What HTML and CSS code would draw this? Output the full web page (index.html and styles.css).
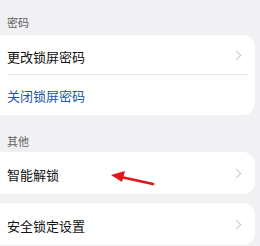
FILE: index.html
```html
<!DOCTYPE html>
<html lang="zh-CN">
<head>
<meta charset="UTF-8">
<meta name="viewport" content="width=device-width, initial-scale=1.0">
<title>锁屏与密码</title>
<link rel="stylesheet" href="styles.css">
</head>
<body>
    <div class="group-title first">密码</div>
    <div class="card">
        <div class="row divider">
            <span>更改锁屏密码</span>
            <span class="chevron"></span>
        </div>
        <div class="row flat link">
            <span>关闭锁屏密码</span>
        </div>
    </div>

    <div class="group-title">其他</div>
    <div class="card">
        <div class="row tall">
            <span>智能解锁</span>
            <span class="chevron"></span>
        </div>
    </div>
    <div class="card gap">
        <div class="row tall">
            <span>安全锁定设置</span>
            <span class="chevron"></span>
        </div>
    </div>

    <!-- seta vermelha apontando para "智能解锁" -->
    <svg class="pointer" width="50" height="16" viewBox="0 0 50 16">
        <line x1="42" y1="12" x2="10" y2="5" stroke="#e3151b" stroke-width="2.8" stroke-linecap="round"/>
        <polygon points="0,3 14,-1 11,10" fill="#e3151b"/>
    </svg>
</body>
</html>
```

FILE: styles.css
```css
body {
    margin: 0;
    padding: 0;
    background: #f1f1f3;
    font-family: "Noto Sans CJK SC", "Noto Sans", sans-serif;
    color: #111;
    position: relative;
    height: 246px;
    overflow: hidden;
}

.group-title {
    font-size: 11px;
    line-height: 14px;
    color: #5e5e5e;
    padding: 19px 7px 4px;
}
.group-title.first {
    padding-top: 15px;
    padding-bottom: 6px;
}

.card {
    background: #fff;
    margin-right: 5px;
    border-radius: 0 12px 12px 0;
}
.card.gap {
    margin-top: 9px;
}

.row {
    height: 40px;
    display: flex;
    align-items: center;
    justify-content: space-between;
    padding: 2px 15px 0 7px;
    box-sizing: border-box;
    font-size: 13px;
    position: relative;
}
.row.flat {
    padding-top: 0;
}
.row.tall {
    height: 42px;
}
.row.divider::after {
    content: "";
    position: absolute;
    left: 7px;
    right: 7px;
    bottom: 0;
    height: 1px;
    background: #e6e6e6;
}

.row.link {
    color: #2156a8;
}

.chevron {
    width: 6px;
    height: 6px;
    border-top: 1px solid #c8c8c8;
    border-right: 1px solid #c8c8c8;
    transform: rotate(45deg);
    margin-top: -2px;
}

.pointer {
    position: absolute;
    left: 111px;
    top: 172px;
    overflow: visible;
}
```
